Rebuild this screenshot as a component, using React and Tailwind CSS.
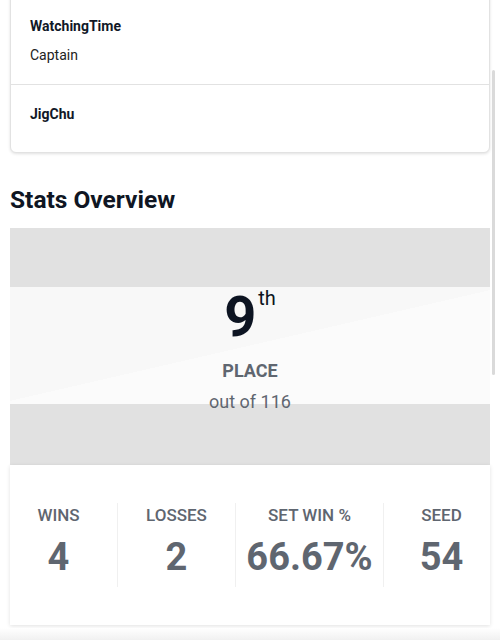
const members = [
  { name: "WatchingTime", role: "Captain" },
  { name: "JigChu", role: "" },
];

const stats = [
  { label: "WINS", value: "4", pad: "pr-[10px]" },
  { label: "LOSSES", value: "2", pad: "" },
  { label: "SET WIN %", value: "66.67%", pad: "" },
  { label: "SEED", value: "54", pad: "pl-[9px]" },
];

export default function App() {
  return (
    <div className="min-h-[640px] bg-white font-['Roboto','Liberation_Sans',sans-serif] text-[#111827] overflow-hidden">
      <div className="px-[10px]">
        {/* ROSTER */}
        <div className="-mt-[4px] rounded-b-md border border-[#e2e2e2] bg-white shadow-[0_1px_3px_rgba(0,0,0,0.12)]">
          {members.map((m, i) => (
            <div
              key={m.name}
              className={
                i === 0
                  ? "px-[19px] pt-[19px] pb-[19px] border-b border-[#e2e2e2]"
                  : "px-[19px] pt-[19px] pb-[28px]"
              }
            >
              <div className="text-[14px] leading-5 font-bold">{m.name}</div>
              {m.role && (
                <div className="mt-[9px] text-[14px] leading-5 text-[#222]">{m.role}</div>
              )}
            </div>
          ))}
        </div>

        {/* STATS */}
        <h2 className="mt-[31px] text-[24.5px] leading-8 font-bold text-[#0f1623]">Stats Overview</h2>

        <div className="mt-3 bg-[#e1e1e1] pt-[59px] pb-[61px]">
          <div className="h-[117px] bg-[linear-gradient(167deg,#f8f8f8_50%,#fbfbfb_50%)]">
            <div className="flex flex-col items-center pt-[3px]">
              <div className="flex items-start">
                <span className="text-[56px] leading-[54px] font-bold text-[#0d1422]">9</span>
                <span className="ml-[2px] -mt-[4px] text-[20px] leading-6 text-[#0d1422]">th</span>
              </div>
              <div className="mt-[15px] text-[18px] leading-6 font-bold text-[#5f6670]">PLACE</div>
              <div className="mt-[7px] text-[18px] leading-6 text-[#5f6670]">out of 116</div>
            </div>
          </div>
        </div>

        <div className="bg-white py-[38px] shadow-[0_1px_4px_rgba(0,0,0,0.12)]">
          <div className="grid grid-cols-[107px_118px_148px_1fr]">
            {stats.map((s, i) => (
              <div
                key={s.label}
                className={`flex flex-col items-center pb-2 ${s.pad} ${
                  i > 0 ? "border-l border-[#f0f0f0]" : ""
                }`}
              >
                <div className="text-[17px] leading-6 font-medium text-[#5f6670]">{s.label}</div>
                <div className="mt-2 text-[38px] leading-[44px] font-bold text-[#5f6670]">{s.value}</div>
              </div>
            ))}
          </div>
        </div>
      </div>

      <div className="mt-[3px] h-4 bg-gradient-to-b from-white to-[#ececec]" />

      {/* scrollbar thumb */}
      <div className="fixed right-[5px] top-[70px] h-[305px] w-[3px] rounded-full bg-[#dadada]" />
    </div>
  );
}
